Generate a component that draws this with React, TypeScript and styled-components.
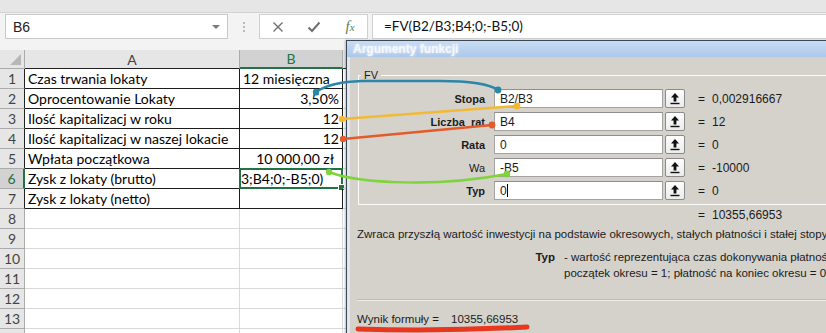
import styled, { createGlobalStyle } from 'styled-components';

const CELL_FONT = `'Lato', 'Liberation Sans', sans-serif`;
const UI_FONT = `'Liberation Sans', Arial, sans-serif`;

const GlobalStyle = createGlobalStyle`
  html, body {
    margin: 0;
    padding: 0;
    background: #fff;
  }
  body {
    width: 826px;
    height: 333px;
    overflow: hidden;
  }
`;

type Row = {
  n: number | '';
  a?: string;
  b?: string;
  align?: 'left' | 'right';
  pad?: number;
  selected?: boolean;
};

const rows: Row[] = [
  { n: 1, a: 'Czas trwania lokaty', b: '12 miesięczna', align: 'left' },
  { n: 2, a: 'Oprocentowanie Lokaty', b: '3,50%', align: 'right' },
  { n: 3, a: 'Ilość kapitalizacj w roku', b: '12', align: 'right' },
  { n: 4, a: 'Ilość kapitalizacj w naszej lokacie', b: '12', align: 'right' },
  { n: 5, a: 'Wpłata początkowa', b: '10 000,00 zł', align: 'right', pad: 8 },
  { n: 6, a: 'Zysk z lokaty (brutto)', b: '3;B4;0;-B5;0)', align: 'left', selected: true },
  { n: 7, a: 'Zysk z lokaty (netto)', b: '' },
];

// row 14 only shows its top edge, so its number stays out of view
const emptyRows: Row['n'][] = [8, 9, 10, 11, 12, 13, ''];

const args = [
  { label: 'Stopa', value: 'B2/B3', result: '0,002916667', bold: true },
  { label: 'Liczba_rat', value: 'B4', result: '12', bold: true },
  { label: 'Rata', value: '0', result: '0', bold: true },
  { label: 'Wa', value: '-B5', result: '-10000', bold: false },
  { label: 'Typ', value: '0', result: '0', bold: true, caret: true },
];

const UpIcon = () => (
  <svg width="10" height="13" viewBox="0 0 10 13">
    <path d="M5 1 L9 5.5 H6.4 V9.5 H3.6 V5.5 H1 Z" fill="#111" />
    <rect x="0.5" y="10.8" width="9" height="1.4" fill="#111" />
  </svg>
);

const CrossIcon = () => (
  <svg width="12" height="12" viewBox="0 0 12 12">
    <path d="M1.5 1.5 L10.5 10.5 M10.5 1.5 L1.5 10.5" stroke="#6f6f6f" strokeWidth="1.4" />
  </svg>
);

const CheckIcon = () => (
  <svg width="14" height="12" viewBox="0 0 14 12">
    <path d="M1.5 6.5 L5 10 L12.5 1.5" stroke="#6f6f6f" strokeWidth="2" fill="none" />
  </svg>
);

const App = () => (
  <Root>
    <GlobalStyle />
    <TopStrip />
    <FormulaBar>
      <NameBox>
        <span>B6</span>
        <DropArrow />
      </NameBox>
      <Grip>
        <i />
        <i />
        <i />
      </Grip>
      <FxBox>
        <FxSlot>
          <CrossIcon />
        </FxSlot>
        <FxSlot>
          <CheckIcon />
        </FxSlot>
        <FxSlot>
          <Fx>
            f<small>x</small>
          </Fx>
        </FxSlot>
      </FxBox>
      <FormulaInput>=FV(B2/B3;B4;0;-B5;0)</FormulaInput>
    </FormulaBar>

    <Sheet>
      <Corner />
      <ColHeader>A</ColHeader>
      <ColHeader $active>B</ColHeader>
      <ColHeader />
      {rows.map((r) => (
        <RowGroup key={r.n} r={r} />
      ))}
      {emptyRows.map((n, i) => (
        <RowGroup key={`e${i}`} r={{ n }} empty />
      ))}
    </Sheet>

    <Dialog>
      <TitleBar>Argumenty funkcji</TitleBar>
      <Body>
        <Group>
          <Legend>FV</Legend>
          <ArgList>
            {args.map((a) => (
              <ArgRow key={a.label}>
                <ArgLabel $bold={a.bold}>{a.label}</ArgLabel>
                <ArgInput>
                  {a.value}
                  {a.caret && <Caret />}
                </ArgInput>
                <RefButton>
                  <UpIcon />
                </RefButton>
                <Eq>=</Eq>
                <ArgValue>{a.result}</ArgValue>
              </ArgRow>
            ))}
          </ArgList>
        </Group>
        <ResultLine>
          <Eq>=</Eq>
          <ArgValue>10355,66953</ArgValue>
        </ResultLine>
        <Description>
          Zwraca przyszłą wartość inwestycji na podstawie okresowych, stałych płatności i stałej stopy
        </Description>
        <TypRow>
          <TypLabel>Typ</TypLabel>
          <TypText>
            - wartość reprezentująca czas dokonywania płatności
            <br />
            początek okresu = 1; płatność na koniec okresu = 0
          </TypText>
        </TypRow>
        <Separator />
        <FormulaResult>
          <span>Wynik formuły =</span>
          <span>10355,66953</span>
        </FormulaResult>
      </Body>
    </Dialog>

    <Annotations width="826" height="333" viewBox="0 0 826 333">
      <g fill="none" strokeWidth="2.5" strokeLinecap="round">
        <path d="M316 92 Q330 82 362 81 L440 81 Q485 81 498 90" stroke="#2b87a9" />
        <path d="M342 119 L517 106" stroke="#f2b935" />
        <path d="M343 139 L492 125" stroke="#e35a2b" />
        <path d="M329 172 C360 184 440 187 507 174" stroke="#7fd33c" />
        <path d="M358 329 Q440 331.5 527 327" stroke="#e8361f" strokeWidth="5" />
      </g>
      <circle cx="316" cy="92" r="3.2" fill="#2b87a9" />
      <circle cx="498" cy="90" r="3.4" fill="#2b87a9" />
      <circle cx="342" cy="119" r="3.2" fill="#f2b935" />
      <circle cx="517" cy="106" r="3.4" fill="#f2b935" />
      <circle cx="343" cy="139" r="3.2" fill="#e35a2b" />
      <circle cx="492" cy="125" r="3.4" fill="#e35a2b" />
      <circle cx="329" cy="172" r="3.2" fill="#7fd33c" />
      <circle cx="507" cy="174" r="3.4" fill="#7fd33c" />
    </Annotations>
  </Root>
);

const RowGroup = ({ r, empty }: { r: Row; empty?: boolean }) => (
  <>
    <RowHeader $active={r.selected} $edge={!empty}>
      {r.n}
    </RowHeader>
    <Cell $edge={!empty}>{r.a}</Cell>
    <Cell $edge={!empty} $align={r.align} $pad={r.pad} $selected={r.selected}>
      {r.b}
    </Cell>
    <Cell />
  </>
);

export default App;

const Root = styled.div`
  position: relative;
  width: 826px;
  height: 333px;
  overflow: hidden;
  background: #fff;
  font-family: ${UI_FONT};
`;

const TopStrip = styled.div`
  height: 12px;
  background: #e6e6e6;
  border-bottom: 1px solid #d2d2d2;
`;

const FormulaBar = styled.div`
  display: flex;
  align-items: flex-start;
  height: 37px;
  box-sizing: border-box;
  padding: 1px 0 0 5px;
  background: #f3f3f3;
`;

const NameBox = styled.div`
  width: 223px;
  height: 25px;
  box-sizing: border-box;
  border: 1px solid #c8c8c8;
  background: #fff;
  display: flex;
  align-items: center;
  justify-content: space-between;
  padding: 0 7px 0 7px;
  font-size: 14px;
  color: #222;
`;

const DropArrow = styled.span`
  width: 0;
  height: 0;
  border-left: 4px solid transparent;
  border-right: 4px solid transparent;
  border-top: 4px solid #7a7a7a;
`;

const Grip = styled.div`
  width: 31px;
  height: 25px;
  display: flex;
  flex-direction: column;
  align-items: center;
  justify-content: center;
  gap: 2px;

  i {
    width: 2px;
    height: 2px;
    background: #b9b9b9;
  }
`;

const FxBox = styled.div`
  width: 109px;
  height: 25px;
  box-sizing: border-box;
  border: 1px solid #d0d0d0;
  background: #fff;
  display: grid;
  grid-template-columns: repeat(3, 36px);
`;

const FxSlot = styled.div`
  display: flex;
  align-items: center;
  justify-content: center;
`;

const Fx = styled.span`
  font-family: 'Liberation Serif', serif;
  font-style: italic;
  font-size: 15px;
  color: #5c7f5c;

  small {
    font-size: 11px;
  }
`;

const FormulaInput = styled.div`
  flex: 1;
  margin-left: 4px;
  height: 25px;
  box-sizing: border-box;
  border: 1px solid #d0d0d0;
  border-right: none;
  background: #fff;
  padding-left: 11px;
  font-family: ${CELL_FONT};
  font-size: 13.5px;
  line-height: 23px;
  color: #111;
`;

const Sheet = styled.div`
  display: grid;
  grid-template-columns: 25px 215px 103px 1fr;
  grid-template-rows: 19px;
  grid-auto-rows: 20px;
  font-family: ${CELL_FONT};
`;

const Corner = styled.div`
  position: relative;
  background: #e6e6e6;
  border-right: 1px solid #ababab;
  border-bottom: 1px solid #ababab;

  &::after {
    content: '';
    position: absolute;
    right: 3px;
    bottom: 3px;
    border-left: 11px solid transparent;
    border-bottom: 11px solid #b7b7b7;
  }
`;

const ColHeader = styled.div<{ $active?: boolean }>`
  box-sizing: border-box;
  display: flex;
  align-items: center;
  justify-content: center;
  font-size: 14px;
  color: ${(p) => (p.$active ? '#217346' : '#444')};
  background: ${(p) => (p.$active ? '#d2d2d2' : '#e6e6e6')};
  border-right: 1px solid #ababab;
  border-bottom: ${(p) => (p.$active ? '2px solid #217346' : '1px solid #222')};
`;

const RowHeader = styled.div<{ $active?: boolean; $edge?: boolean }>`
  box-sizing: border-box;
  display: flex;
  align-items: center;
  justify-content: center;
  font-size: 14px;
  color: ${(p) => (p.$active ? '#217346' : '#444')};
  background: ${(p) => (p.$active ? '#d2d2d2' : '#e6e6e6')};
  border-bottom: 1px solid #ababab;
  border-right: ${(p) =>
    p.$active ? '2px solid #217346' : p.$edge ? '1px solid #222' : '1px solid #ababab'};
`;

const Cell = styled.div<{
  $edge?: boolean;
  $align?: 'left' | 'right';
  $pad?: number;
  $selected?: boolean;
}>`
  position: relative;
  box-sizing: border-box;
  display: flex;
  align-items: center;
  justify-content: ${(p) => (p.$align === 'right' ? 'flex-end' : 'flex-start')};
  padding: 0 ${(p) => p.$pad ?? 3}px 0 ${(p) => (p.$selected ? 1 : 3)}px;
  white-space: nowrap;
  overflow: hidden;
  font-size: 14px;
  color: #000;
  border-right: 1px solid ${(p) => (p.$edge ? '#1c1c1c' : '#d9d9d9')};
  border-bottom: 1px solid ${(p) => (p.$edge ? '#1c1c1c' : '#d9d9d9')};

  ${(p) =>
    p.$selected &&
    `
    overflow: visible;
    &::before {
      content: '';
      position: absolute;
      inset: -1px -1px -1px -1px;
      border: 2px solid #217346;
    }
    &::after {
      content: '';
      position: absolute;
      right: -3px;
      bottom: -3px;
      width: 5px;
      height: 5px;
      background: #217346;
      border: 1px solid #fff;
    }
  `}
`;

const Dialog = styled.div`
  position: absolute;
  left: 346px;
  top: 40px;
  width: 540px;
  height: 310px;
  border: 1px solid #3d4856;
  background: #e2e7ed;
  padding: 0 3px;
  display: flex;
  flex-direction: column;
  box-shadow: -1px 0 2px rgba(0, 0, 0, 0.25);
  font-family: ${UI_FONT};
  color: #1b1b1b;
`;

const TitleBar = styled.div`
  height: 16px;
  margin: 0 -3px;
  padding-left: 6px;
  background: linear-gradient(#c9dcf3, #abc8eb);
  color: #f4f8fd;
  font-size: 12px;
  font-weight: bold;
  line-height: 16px;
  text-shadow: 0 0 3px rgba(255, 255, 255, 0.9);
  white-space: nowrap;
`;

const Body = styled.div`
  flex: 1;
  background: #d5d2cc;
  padding: 11px 0 0 8px;
  font-size: 11px;
`;

const Group = styled.fieldset`
  margin: 0;
  padding: 0 0 4px;
  width: 480px;
  box-sizing: border-box;
  border: 1px solid #fbfbfa;
  border-right: none;
`;

const Legend = styled.legend`
  margin-left: 2px;
  padding: 0 3px;
  font-size: 11px;
  line-height: 14px;
`;

const ArgList = styled.div`
  display: flex;
  flex-direction: column;
  gap: 4px;
  padding-top: 7px;
`;

const ArgRow = styled.div`
  display: flex;
  align-items: center;
  height: 19px;
`;

const ArgLabel = styled.div<{ $bold?: boolean }>`
  flex-shrink: 0;
  width: 135px;
  box-sizing: border-box;
  padding-right: 9px;
  text-align: right;
  font-weight: ${(p) => (p.$bold ? 'bold' : 'normal')};
`;

const ArgInput = styled.div`
  flex-shrink: 0;
  width: 169px;
  height: 19px;
  box-sizing: border-box;
  border: 1px solid #a3a3a3;
  border-top-color: #8e8e8e;
  background: #fff;
  padding-left: 5px;
  display: flex;
  align-items: center;
  font-size: 12px;
`;

const Caret = styled.span`
  width: 1px;
  height: 13px;
  background: #000;
`;

const RefButton = styled.div`
  flex-shrink: 0;
  width: 20px;
  height: 19px;
  margin-left: 2px;
  box-sizing: border-box;
  border: 1px solid #8a8a8a;
  border-radius: 2px;
  background: linear-gradient(#fdfdfd, #ececec);
  display: flex;
  align-items: center;
  justify-content: center;
`;

const Eq = styled.span`
  margin-left: 13px;
  font-size: 12px;
`;

const ArgValue = styled.span`
  margin-left: 7px;
  font-size: 12px;
`;

const ResultLine = styled.div`
  display: flex;
  align-items: center;
  height: 14px;
  margin-top: 3px;
  padding-left: 327px;
`;

const Description = styled.div`
  margin: 5px 0 0 -1px;
  line-height: 14px;
  font-size: 11.5px;
  white-space: nowrap;
`;

const TypRow = styled.div`
  display: flex;
  margin-top: 8px;
  line-height: 16px;
  font-size: 11.5px;
`;

const TypLabel = styled.div`
  flex-shrink: 0;
  width: 197px;
  text-align: right;
  font-weight: bold;
`;

const TypText = styled.div`
  margin-left: 9px;
  white-space: nowrap;
`;

const Separator = styled.div`
  margin: 18px 0 0 -1px;
  border-top: 1px solid #bfbbb4;
  border-bottom: 1px solid #eeece8;
`;

const FormulaResult = styled.div`
  display: flex;
  gap: 12px;
  margin: 11px 0 0 -1px;
  line-height: 14px;
  font-size: 11.5px;
`;

const Annotations = styled.svg`
  position: absolute;
  left: 0;
  top: 0;
  pointer-events: none;
`;
